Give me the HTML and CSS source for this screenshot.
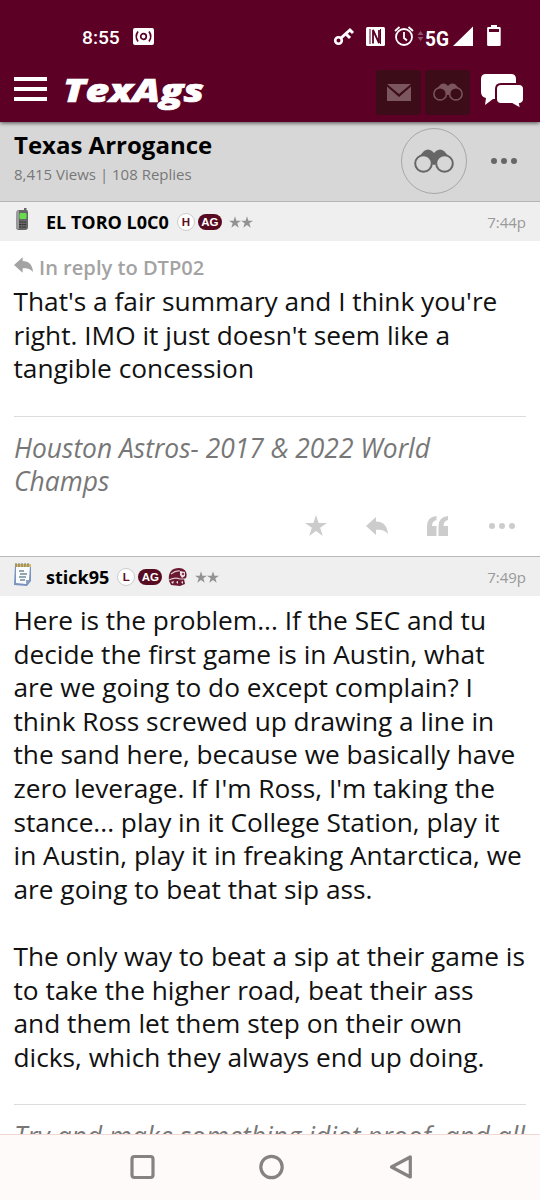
FILE: index.html
```html
<!DOCTYPE html>
<html lang="en">
<head>
  <meta charset="UTF-8">
  <meta name="viewport" content="width=device-width, initial-scale=1.0">
  <title>Texas Arrogance | TexAgs</title>
  <link rel="stylesheet" href="styles.css">
</head>
<body>
  <svg class="symbols" width="0" height="0">
    <symbol id="binoculars" viewBox="0 0 40 24">
      <path d="M2 11 L10 2 Q14 -1 18 2 L20 4 L22 2 Q26 -1 30 2 L38 11 L30 18 L23 14 Q20 18 17 14 L10 18 Z" fill="currentColor"/>
      <circle class="lens" cx="9.5" cy="14.5" r="8.3"/>
      <circle class="lens" cx="30.5" cy="14.5" r="8.3"/>
    </symbol>
    <symbol id="reply" viewBox="0 0 22 18">
      <path d="M0 9 L10 0 V4.5 C17 4.5 21.5 9 22 17 C18 13 15 12.8 10 12.8 V18 Z" fill="currentColor"/>
    </symbol>
    <symbol id="star" viewBox="0 0 22 21">
      <path d="M11 0 L13.6 8 H22 L15.2 12.8 L17.8 21 L11 16 L4.2 21 L6.8 12.8 L0 8 H8.4 Z" fill="currentColor"/>
    </symbol>
    <symbol id="dots" viewBox="0 0 26 6">
      <g fill="currentColor"><circle cx="3" cy="3" r="3"/><circle cx="13" cy="3" r="3"/><circle cx="23" cy="3" r="3"/></g>
    </symbol>
    <symbol id="quote" viewBox="0 0 22 20">
      <path d="M9.5 0 V4 Q5 5 5 10 H9.5 V20 H0 V10 Q0 1 9.5 0 Z M21 0 V4 Q16.5 5 16.5 10 H21 V20 H11.5 V10 Q11.5 1 21 0 Z" fill="currentColor"/>
    </symbol>
  </svg>

  <div class="phone">
    <header class="top">
      <div class="status-bar">
        <span class="clock">8:55</span>
        <svg class="cast" width="21" height="17" viewBox="0 0 21 17">
          <rect width="21" height="17" rx="2" fill="#fff"/>
          <g fill="none" stroke="#5c0025" stroke-width="1.7"><circle cx="10.5" cy="8.5" r="2.8"/><path d="M5 3.5 Q1.5 8.5 5 13.5 M16 3.5 Q19.5 8.5 16 13.5"/></g>
        </svg>
        <svg class="status-icons" width="170" height="28" viewBox="332 22 170 28">
          <g fill="none" stroke="#fff">
            <circle cx="338.500" cy="40.500" r="3.300" stroke-width="2.600"/>
            <path d="M341 38 L351 29 M346 34 L350 38 M350 30 L353 33" stroke-width="3"/>
            <circle cx="404" cy="37" r="8" stroke-width="1.800"/>
            <path d="M395 31 L399.500 27 M413 31 L408.500 27 M404 32 V38 L407 40.500" stroke-width="1.800"/>
          </g>
          <rect x="366" y="27" width="19" height="19" rx="1.5" fill="#fff"/>
          <path d="M370 44 V29 M380.500 29 V44" stroke="#5c0025" stroke-width="1"/>
          <path d="M373 43.500 V30 L379 43 V30" fill="none" stroke="#5c0025" stroke-width="1.800"/>
          <path d="M417.500 35 L420.500 31 L423.500 35 Z M417.500 37 H423.500 L420.500 41 Z" fill="#93516a"/>
          <text x="425" y="46" textLength="24" lengthAdjust="spacingAndGlyphs" class="network">5G</text>
          <path d="M453 46 H473 V26.500 Z M488.500 27 h2.500 v-2 h6 v2 h2.500 q1.200 0 1.200 1.200 v16.500 q0 1.300 -1.300 1.300 h-11 q-1.300 0 -1.300 -1.300 v-16.500 q0 -1.200 1.400 -1.200 Z" fill="#fff"/>
          <rect x="489" y="29" width="10" height="3" fill="#5c0025"/>
        </svg>
      </div>
      <nav class="app-bar">
        <div class="menu"><i></i><i></i><i></i></div>
        <svg class="logo" width="144" height="46" viewBox="0 0 144 46">
          <text x="0" y="33" textLength="141" lengthAdjust="spacingAndGlyphs">TexAgs</text>
        </svg>
        <div class="tile">
          <svg width="24" height="17" viewBox="0 0 24 17"><path d="M0 0 H24 L12 10 Z M0 2.500 L12 13 L24 2.500 V17 H0 Z" fill="currentColor"/></svg>
        </div>
        <div class="tile tile-watch"><svg width="30" height="18"><use href="#binoculars"/></svg></div>
        <svg class="chat" width="43" height="35" viewBox="0 0 43 35">
          <path d="M5 0 H30 Q35 0 35 5 V20 Q35 25 30 25 H12 L4 31 L5 24 Q0 23 0 18 V5 Q0 0 5 0 Z" fill="#fff"/>
          <path d="M20 10 H38 Q43 10 43 15 V25 Q43 29 39 30 L40 35 L31 30 H20 Q15 30 15 25 V15 Q15 10 20 10 Z" fill="#fff" stroke="#5c0025" stroke-width="2"/>
        </svg>
      </nav>
    </header>

    <section class="topic">
      <div class="topic-info">
        <h1>Texas Arrogance</h1>
        <p>8,415 Views | 108 Replies</p>
      </div>
      <div class="watch"><svg width="40" height="24"><use href="#binoculars"/></svg></div>
      <svg class="topic-more" width="26" height="6"><use href="#dots"/></svg>
    </section>

    <article class="post first">
      <div class="post-header">
        <svg class="avatar" width="18" height="24" viewBox="0 0 18 24">
          <path d="M2.500 4 Q2.500 2 5 2 H10 V0 H12.500 V2 Q14 2 14 4 V19 Q14 22 11 22 H5 Q2 22 2 19 Z" fill="#666"/>
          <path d="M2.500 4 Q2.500 2 5 2 V21 Q2 21 2 19 Z" fill="#9b9b9b"/>
          <rect x="5.500" y="5" width="7" height="6" rx="1" fill="#67dc4c"/>
          <path d="M5 14 H12 M5 16.500 H12 M5 19 H12" stroke="#303030" stroke-dasharray="2 .6"/>
        </svg>
        <strong class="name">EL TORO L0C0</strong>
        <span class="badge round">H</span>
        <span class="badge ag">AG</span>
        <span class="stars"><svg width="12" height="12"><use href="#star"/></svg><svg width="12" height="12"><use href="#star"/></svg></span>
        <time>7:44p</time>
      </div>
      <div class="reply-to"><svg width="19" height="16"><use href="#reply"/></svg><span>In reply to DTP02</span></div>
      <p class="message">That's a fair summary and I think you're<br>right. IMO it just doesn't seem like a<br>tangible concession</p>
      <p class="signature">Houston Astros- 2017 &amp; 2022 World<br>Champs</p>
      <div class="actions">
        <svg width="22" height="21"><use href="#star"/></svg>
        <svg width="22" height="18"><use href="#reply"/></svg>
        <svg width="22" height="20"><use href="#quote"/></svg>
        <svg width="26" height="6"><use href="#dots"/></svg>
      </div>
    </article>

    <article class="post second">
      <div class="post-header">
        <svg class="avatar note" width="20" height="26" viewBox="0 0 20 26">
          <path d="M2 3 L18 2 V19 L14 24 L1 23 Z" fill="#7793be"/>
          <path d="M3 4 H17 L16 18 L13 22 L3 21 Z" fill="#f8fcff"/>
          <path d="M2 2 H18 V5 H2 Z" fill="#d4bb73"/>
          <path d="M3 1 V5 M6 1 V5 M9 1 V5 M12 1 V5 M15 1 V5" stroke="#777353"/>
          <path d="M6 9 H11 M7 12 H14 M6 15 H13 M7 18 H12" stroke="#718b91" stroke-width="1.300"/>
          <path d="M13 22 L17 18 L13 18 Z" fill="#91a3bb"/>
        </svg>
        <strong class="name">stick95</strong>
        <span class="badge round">L</span>
        <span class="badge ag">AG</span>
        <svg class="helmet" width="19" height="18" viewBox="0 0 19 18">
          <path d="M1 13 C0 5 3 0 11 0 C17 0 20 5 18 10 L16 11 L17 16 L12 18 L3 17 Z" fill="#6b1831"/>
          <path d="M3 6 Q8 2 12 3 M1 12 Q7 9 12 11 H17" fill="none" stroke="#d9cbd0" stroke-width="1.200"/>
          <path d="M12 3 L17 4 V8 L14 10 L12 7 Z M3 14 L6 13 L5 16 Z M8 14 L10 13 V16 Z M13 14 L15 13 V16 Z" fill="#eee6e8"/>
          <circle cx="15" cy="6" r="1.300" fill="#8a4054"/>
        </svg>
        <span class="stars"><svg width="12" height="12"><use href="#star"/></svg><svg width="12" height="12"><use href="#star"/></svg></span>
        <time>7:49p</time>
      </div>
      <p class="message">Here is the problem... If the SEC and tu<br>decide the first game is in Austin, what<br>are we going to do except complain? I<br>think Ross screwed up drawing a line in<br>the sand here, because we basically have<br>zero leverage. If I'm Ross, I'm taking the<br>stance... play in it College Station, play it<br>in Austin, play it in freaking Antarctica, we<br>are going to beat that sip ass.<br><br>The only way to beat a sip at their game is<br>to take the higher road, beat their ass<br>and them let them step on their own<br>dicks, which they always end up doing.</p>
      <p class="signature">Try and make something idiot proof, and all</p>
    </article>

    <footer class="system-nav">
      <svg width="540" height="65" viewBox="0 0 540 65" fill="none" stroke="#858281" stroke-width="3.200">
        <rect x="132" y="21.500" width="21" height="21" rx="2.500"/>
        <circle cx="271.500" cy="32" r="10.700"/>
        <path d="M410.300 22 V42 L391.500 32 Z" stroke-linejoin="round"/>
      </svg>
    </footer>
  </div>
</body>
</html>
```
FILE: styles.css
```css
* {
  box-sizing: border-box;
}
body {
  margin: 0;
  background: #fff;
  color: #111;
  font-family: "Open Sans", "Noto Sans", sans-serif;
}
h1, p {
  margin: 0;
}
svg {
  display: block;
  flex-shrink: 0;
}
.symbols {
  display: none;
}
.phone {
  display: flex;
  flex-direction: column;
  width: 540px;
  height: 1200px;
  overflow: hidden;
}

/* header */
.top {
  height: 122px;
  flex-shrink: 0;
  background: #5c0025;
  box-shadow: 0 1px 4px rgba(0, 0, 0, 0.65);
  z-index: 1;
  color: #fff;
}
.status-bar {
  display: flex;
  align-items: center;
  height: 64px;
  padding: 8px 38px 0 82px;
}
.clock {
  width: 51px;
  padding-top: 2px;
  font: 500 19.2px Roboto, sans-serif;
}
.status-icons {
  margin-left: auto;
}
.network {
  fill: #fff;
  font: bold 21px Roboto, sans-serif;
}
.app-bar {
  display: flex;
  align-items: center;
  height: 56px;
  padding: 0 16px 0 14px;
}
.menu {
  display: flex;
  flex-direction: column;
  gap: 6px;
  width: 33px;
  margin-right: 16px;
  margin-top: -6px;
}
.menu i {
  height: 4px;
  background: #fff;
}
.logo {
  margin-right: auto;
}
.logo text {
  fill: #fff;
  stroke: #fff;
  stroke-width: 0.7px;
  font: italic 800 32px "Open Sans", sans-serif;
}
.tile {
  --lens: #3c0d18;
  display: grid;
  place-items: center;
  width: 45px;
  height: 45px;
  border-radius: 3px;
  background: #3c0d18;
  color: #7c565e;
}
.tile-watch {
  margin-left: 4px;
}
.lens {
  fill: var(--lens, #d7d7d7);
  stroke: currentColor;
  stroke-width: 2;
}
.chat {
  margin-left: 11px;
  margin-top: -2px;
}

/* topic title */
.topic {
  display: flex;
  align-items: center;
  height: 80px;
  flex-shrink: 0;
  padding: 0 23px 2px 14px;
  background: #d7d7d7;
  border-bottom: 1px solid #b5b5b5;
}
.topic-info {
  flex: 1;
  padding-bottom: 5px;
}
h1 {
  font-size: 24px;
  line-height: 32px;
  color: #000;
}
.topic p {
  color: #777;
  font-size: 15px;
  line-height: 26px;
}
.watch {
  display: grid;
  place-items: center;
  width: 66px;
  height: 66px;
  margin-right: 24px;
  border: 1px solid #a7a7a7;
  border-radius: 50%;
  color: #666;
}
.topic-more {
  color: #666;
}

/* posts */
.post {
  flex-shrink: 0;
}
.first {
  height: 354px;
}
.second {
  height: 578px;
  overflow: hidden;
  border-top: 1px solid #b9b9b9;
}
.post-header {
  display: flex;
  align-items: center;
  height: 39px;
  padding: 0 14px;
  background: #efefef;
}
.avatar {
  width: 20px;
  margin: -3px 13px 0 -1px;
}
.name {
  margin-right: 8px;
  color: #000;
  font-size: 18px;
}
.badge {
  display: grid;
  place-items: center;
  height: 18px;
  font: bold 11.5px "Liberation Sans", sans-serif;
}
.round {
  width: 18px;
  margin-right: 3px;
  border: 1px solid #ccc;
  border-radius: 50%;
  background: #fff;
  color: #611123;
}
.ag {
  width: 24px;
  height: 16px;
  margin-right: 6px;
  border-radius: 8px;
  background: #560b20;
  color: #fff;
}
.helmet {
  margin-right: 7px;
}
.stars {
  display: flex;
  margin-left: 1px;
  color: #929292;
}
time {
  margin-left: auto;
  color: #999;
  font-size: 15px;
}
.reply-to {
  display: flex;
  align-items: center;
  gap: 6px;
  height: 25px;
  margin: 14px 14px 5px;
  color: #a3a3a3;
  font-size: 20.1px;
  font-weight: 600;
}
.reply-to svg {
  margin-top: -6px;
}
.message {
  padding-left: 13.5px;
  font-size: 26.25px;
  line-height: 33.6px;
  white-space: nowrap;
}
.signature {
  margin: 30px 14px 0;
  padding-top: 15px;
  border-top: 1px solid #ddd;
  color: #777;
  font-size: 26.4px;
  font-style: italic;
  line-height: 33.6px;
  white-space: nowrap;
}
.second .message {
  padding-top: 8px;
}
.actions {
  display: grid;
  grid-template-columns: 61px 61px 62px 26px;
  align-items: center;
  height: 34px;
  margin: 10px 0 0 305px;
  color: #ccc;
}

/* android navigation */
.system-nav {
  height: 66px;
  flex-shrink: 0;
  background: #fffafa;
  border-top: 1px solid #f2d8d2;
}
```
